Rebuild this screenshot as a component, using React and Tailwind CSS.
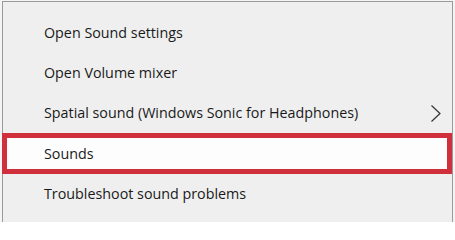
import React from "react";

const items = [
  { label: "Open Sound settings" },
  { label: "Open Volume mixer" },
  { label: "Spatial sound (Windows Sonic for Headphones)", sub: true },
  { label: "Sounds", marked: true },
  { label: "Troubleshoot sound problems" },
];

const Chevron = () => (
  <svg width="12" height="19" viewBox="0 0 12 19" fill="none" className="text-[#333]">
    <path d="M1.5 1.5 L10 9.5 L1.5 17.5" stroke="currentColor" strokeWidth="1.2" />
  </svg>
);

export default function App() {
  return (
    <div className="w-[455px] h-[222px] overflow-hidden bg-[#f4f4f4] pt-[1px] pl-[2px] pr-[2px]">
      <div
        className="h-full bg-[#efefef] border-t border-l border-r border-[#9a9a9a] pt-[11px] text-[14.3px] text-[#1a1a1a]"
        style={{ fontFamily: '"Segoe UI", "Open Sans", "Noto Sans", sans-serif' }}
      >
        {items.map((it) =>
          it.marked ? (
            <div
              key={it.label}
              className="-ml-[1px] h-[41px] flex items-center pl-[37px] bg-[#fdfdfd] border-[5px] border-[#d0303c]"
            >
              {it.label}
            </div>
          ) : (
            <div key={it.label} className="h-[40px] flex items-center pl-[41px] pr-[10px]">
              <span className="flex-1">{it.label}</span>
              {it.sub && <Chevron />}
            </div>
          )
        )}
      </div>
    </div>
  );
}
